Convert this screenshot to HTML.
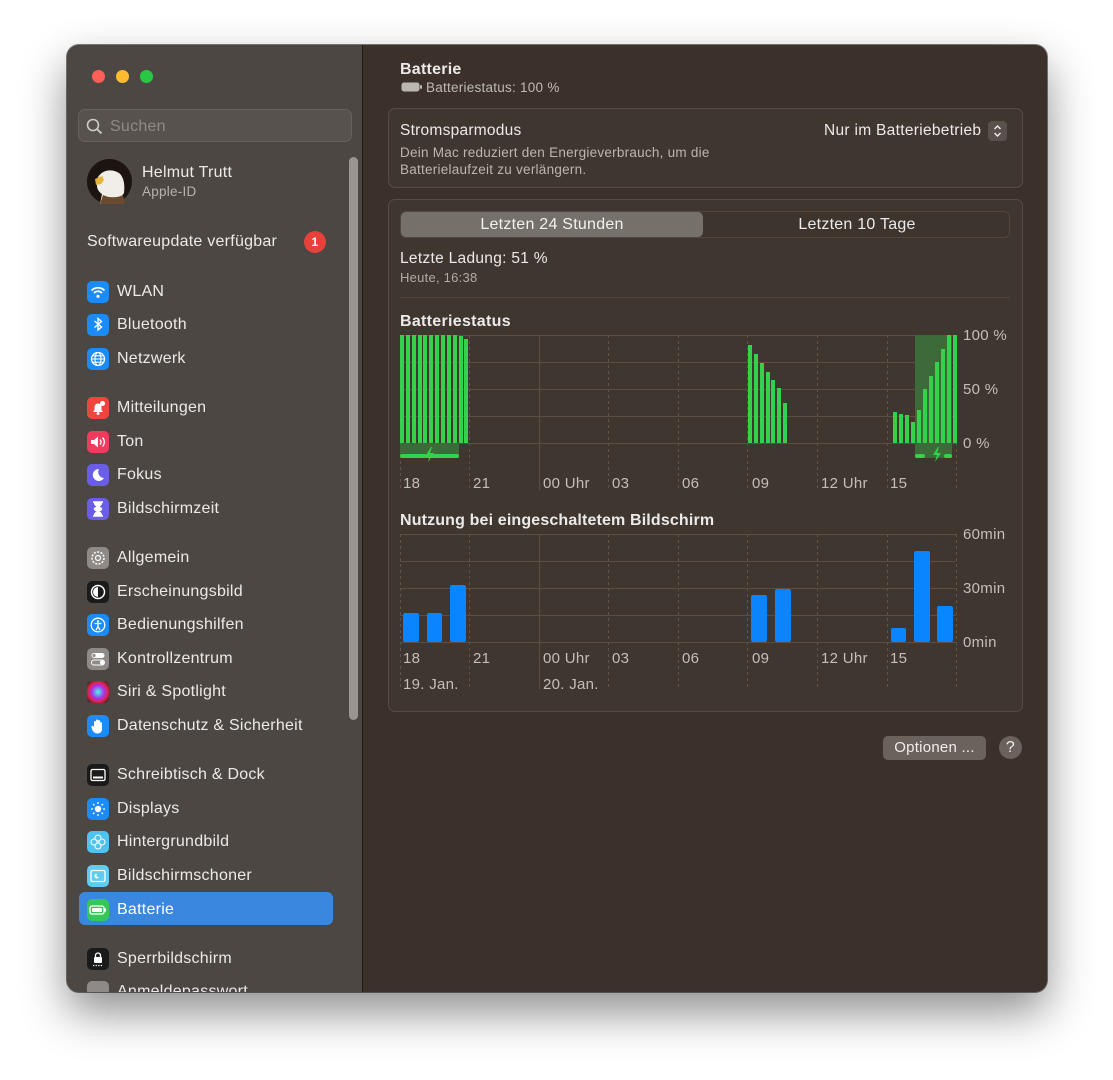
<!DOCTYPE html>
<html><head><meta charset="utf-8"><style>
*{margin:0;padding:0;box-sizing:border-box}
body{width:1113px;height:1080px;background:#fff;font-family:"Liberation Sans",sans-serif;position:relative;overflow:hidden;letter-spacing:.25px}
.win{position:absolute;left:67px;top:45px;width:980px;height:947px;border-radius:12px;overflow:hidden;background:#3b312a;box-shadow:0 20px 45px rgba(0,0,0,.45),0 0 0 1px rgba(0,0,0,.5)}
.side{position:absolute;left:0;top:0;width:296px;height:947px;background:#4c4743;border-right:1px solid #1e1a17}
.t{position:absolute;white-space:nowrap}
.dot{position:absolute;top:25px;width:13px;height:13px;border-radius:50%}
.row{position:absolute;left:20px;height:22px;display:flex;align-items:center;color:#eceae8;font-size:16px;padding-top:1px}
.ic{width:22px;height:22px;border-radius:5px;margin-right:8px;display:flex;align-items:center;justify-content:center;color:#fff;font-size:13px;flex:none}
.card{position:absolute;background:#3f3630;border:1px solid #564c45;border-radius:7px}
</style></head><body>
<div class="win">
 <div class="side">
  <div class="dot" style="left:25px;background:#fe5f57"></div>
  <div class="dot" style="left:49px;background:#febc2e"></div>
  <div class="dot" style="left:73px;background:#28c840"></div>
  <div style="position:absolute;left:11px;top:64px;width:274px;height:33px;border-radius:7px;background:#57524e;border:1px solid #66615d"></div>
  <svg style="position:absolute;left:19px;top:73px" width="17" height="17"><circle cx="7" cy="7" r="5.5" fill="none" stroke="#cfcbc8" stroke-width="1.6"/><path d="M11 11l4.5 4.5" stroke="#cfcbc8" stroke-width="1.8"/></svg>
  <div class="t" style="left:43px;top:73px;font-size:16px;color:#8f8a86">Suchen</div>
  <svg style="position:absolute;left:20px;top:114px" width="45" height="45"><circle cx="22.5" cy="22.5" r="22.5" fill="#1c1410"/><path d="M10 20c4-9 14-11 22-6 5 4 6 12 5 20l-8 11H13l2-10c-3-2-5-5-5-8z" fill="#f1eee9"/><path d="M8 20l7-3 2 4-3 4-5 1z" fill="#e7b43a"/><path d="M13 45l3-9c6 3 14 3 20 0l2 9z" fill="#6b4a30"/></svg>
  <div class="t" style="left:75px;top:119px;font-size:16px;color:#eceae8">Helmut Trutt</div>
  <div class="t" style="left:75px;top:139px;font-size:13.5px;color:#b7b2ae">Apple-ID</div>
  <div class="t" style="left:20px;top:188px;font-size:16px;color:#eceae8;letter-spacing:.25px">Softwareupdate verfügbar</div>
  <div style="position:absolute;left:237px;top:186px;width:22px;height:22px;border-radius:50%;background:#e8403a;color:#fff;font-size:12px;font-weight:bold;text-align:center;line-height:22px">1</div>
  <div style="position:absolute;left:282px;top:112px;width:9px;height:563px;border-radius:5px;background:#9a9591"></div>
  <div style="position:absolute;left:12px;top:847px;width:254px;height:33px;border-radius:6px;background:#3a87e0"></div>

  <div class="row" style="top:235px"><div class="ic" style="background:#1a8bf7">
   <svg width="16" height="14"><path d="M1.5 5.5a9 9 0 0 1 13 0M4 8a5.5 5.5 0 0 1 8 0" stroke="#fff" stroke-width="1.8" fill="none"/><circle cx="8" cy="11.3" r="1.6" fill="#fff"/></svg></div>WLAN</div>
  <div class="row" style="top:268px"><div class="ic" style="background:#1a8bf7">
   <svg width="10" height="15"><path d="M1.5 4l7 6-3.5 3V1.5l3.5 3-7 6" stroke="#fff" stroke-width="1.4" fill="none"/></svg></div>Bluetooth</div>
  <div class="row" style="top:302px"><div class="ic" style="background:#1a8bf7">
   <svg width="16" height="16"><circle cx="8" cy="8" r="6.5" stroke="#fff" stroke-width="1.3" fill="none"/><ellipse cx="8" cy="8" rx="3" ry="6.5" stroke="#fff" stroke-width="1.1" fill="none"/><path d="M1.5 8h13M2.5 4.8h11M2.5 11.2h11" stroke="#fff" stroke-width="1.1"/></svg></div>Netzwerk</div>
  <div class="row" style="top:351px"><div class="ic" style="background:#f0453e">
   <svg width="16" height="16"><path d="M3 12h10l-1.5-2V7a3.5 3.5 0 0 0-7 0v3z" fill="#fff"/><circle cx="8" cy="13.5" r="1.5" fill="#fff"/><circle cx="12.5" cy="3.5" r="2.5" fill="#fff"/></svg></div>Mitteilungen</div>
  <div class="row" style="top:385px"><div class="ic" style="background:#f03a5e">
   <svg width="16" height="14"><path d="M1 5h3l4-3.5v11L4 9H1z" fill="#fff"/><path d="M10 4.5a3.5 3.5 0 0 1 0 5M12.5 2.5a6.5 6.5 0 0 1 0 9" stroke="#fff" stroke-width="1.3" fill="none"/></svg></div>Ton</div>
  <div class="row" style="top:418px"><div class="ic" style="background:#6a5ee8">
   <svg width="14" height="14"><path d="M8 1a6 6 0 1 0 5 9A6 6 0 0 1 8 1z" fill="#fff"/></svg></div>Fokus</div>
  <div class="row" style="top:452px"><div class="ic" style="background:#6a5ee8">
   <svg width="12" height="16"><path d="M1 1h10M1 15h10M2.5 1.5c0 4 7 4.5 7 6.5s-7 2.5-7 6.5h7c0-4-7-4.5-7-6.5s7-2.5 7-6.5" stroke="#fff" stroke-width="1.5" fill="#fff"/></svg></div>Bildschirmzeit</div>
  <div class="row" style="top:501px"><div class="ic" style="background:#8e8a87">
   <svg width="16" height="16"><circle cx="8" cy="8" r="6" stroke="#fff" stroke-width="1.5" fill="none" stroke-dasharray="2 1.4"/><circle cx="8" cy="8" r="2.5" stroke="#fff" stroke-width="1.2" fill="none"/></svg></div>Allgemein</div>
  <div class="row" style="top:535px"><div class="ic" style="background:#1a1a1a">
   <svg width="16" height="16"><circle cx="8" cy="8" r="6.5" stroke="#fff" stroke-width="1.5" fill="none"/><path d="M8 3a5 5 0 0 0 0 10z" fill="#fff"/></svg></div>Erscheinungsbild</div>
  <div class="row" style="top:568px"><div class="ic" style="background:#1a8bf7">
   <svg width="16" height="16"><circle cx="8" cy="8" r="6.8" stroke="#fff" stroke-width="1.3" fill="none"/><circle cx="8" cy="4.5" r="1.2" fill="#fff"/><path d="M4.5 6.5h7M8 6.5v3l-2 3.5M8 9.5l2 3.5" stroke="#fff" stroke-width="1.3" fill="none"/></svg></div>Bedienungshilfen</div>
  <div class="row" style="top:602px"><div class="ic" style="background:#8e8a87">
   <svg width="16" height="16"><rect x="1.5" y="2" width="13" height="5" rx="2.5" fill="#fff"/><rect x="1.5" y="9" width="13" height="5" rx="2.5" stroke="#fff" fill="none"/><circle cx="4" cy="4.5" r="1.6" fill="#8e8a87"/><circle cx="12" cy="11.5" r="2" fill="#fff"/></svg></div>Kontrollzentrum</div>
  <div class="row" style="top:635px"><div class="ic" style="background:radial-gradient(circle,#4fd 0,#a3e 40%,#d24 65%,#222 90%)"></div>Siri &amp; Spotlight</div>
  <div class="row" style="top:669px"><div class="ic" style="background:#1a8bf7">
   <svg width="14" height="16"><path d="M3 9V4a1 1 0 0 1 2 0V8V2.5a1 1 0 0 1 2 0V8V3a1 1 0 0 1 2 0v5.5V5a1 1 0 0 1 2 0v6c0 3-2 4.5-4.5 4.5S2.5 14 1 11.5L.5 9a1 1 0 0 1 2-.5z" fill="#fff"/></svg></div>Datenschutz &amp; Sicherheit</div>
  <div class="row" style="top:718px"><div class="ic" style="background:#1a1a1a">
   <svg width="16" height="14"><rect x="1" y="1.5" width="14" height="11" rx="1.5" stroke="#fff" stroke-width="1.3" fill="none"/><rect x="3" y="8.5" width="10" height="2" fill="#fff"/></svg></div>Schreibtisch &amp; Dock</div>
  <div class="row" style="top:752px"><div class="ic" style="background:#1a8bf7">
   <svg width="16" height="16"><circle cx="8" cy="8" r="3.2" fill="#fff"/><path d="M8 1v2M8 13v2M1 8h2M13 8h2M3 3l1.4 1.4M11.6 11.6L13 13M3 13l1.4-1.4M11.6 4.4L13 3" stroke="#fff" stroke-width="1.3"/></svg></div>Displays</div>
  <div class="row" style="top:785px"><div class="ic" style="background:#4ec3ee">
   <svg width="16" height="16" fill="none" stroke="#fff" stroke-width="1"><circle cx="8" cy="4" r="3"/><circle cx="8" cy="12" r="3"/><circle cx="4" cy="8" r="3"/><circle cx="12" cy="8" r="3"/></svg></div>Hintergrundbild</div>
  <div class="row" style="top:819px"><div class="ic" style="background:#5fcdf0">
   <svg width="16" height="14"><rect x="1" y="1.5" width="14" height="11" rx="1.5" stroke="#fff" stroke-width="1.3" fill="none"/><path d="M7 4.5a2.5 2.5 0 1 0 2 4a2.5 2.5 0 0 1-2-4z" fill="#fff"/></svg></div>Bildschirmschoner</div>
  <div class="row" style="top:853px;color:#fff"><div class="ic" style="background:#35c759">
   <svg width="18" height="12"><rect x="1" y="2" width="14" height="8" rx="2" stroke="#fff" stroke-width="1.3" fill="none"/><rect x="3" y="4" width="10" height="4" rx="1" fill="#fff"/><rect x="15.5" y="4.5" width="1.5" height="3" fill="#fff"/></svg></div>Batterie</div>
  <div class="row" style="top:902px"><div class="ic" style="background:#1a1a1a">
   <svg width="16" height="16"><rect x="4" y="6" width="8" height="6" rx="1" fill="#fff"/><path d="M5.5 6V4.5a2.5 2.5 0 0 1 5 0V6" stroke="#fff" stroke-width="1.3" fill="none"/><path d="M3 14.5h10" stroke="#fff" stroke-width="1.3" stroke-dasharray="1.3 1.3"/></svg></div>Sperrbildschirm</div>
  <div class="row" style="top:935px"><div class="ic" style="background:#8e8a87"></div>Anmeldepasswort</div>
 </div>
</div>

<div class="t" style="left:400px;top:61px;font-size:16px;font-weight:bold;color:#eceae8">Batterie</div>
<svg style="position:absolute;left:401px;top:81px" width="22" height="12"><rect x=".5" y="1.5" width="18" height="9" rx="2.5" fill="#bcb6b1"/><rect x="19" y="4" width="2" height="4" rx="1" fill="#bcb6b1"/></svg>
<div class="t" style="left:426px;top:80px;font-size:13.5px;color:#c0bab5">Batteriestatus: 100 %</div>

<div class="card" style="left:388px;top:108px;width:635px;height:80px"></div>
<div class="t" style="left:400px;top:122px;font-size:15.5px;color:#eceae8">Stromsparmodus</div>
<div class="t" style="left:400px;top:144px;font-size:13.5px;line-height:17px;color:#bcb5b0">Dein Mac reduziert den Energieverbrauch, um die<br>Batterielaufzeit zu verlängern.</div>
<div class="t" style="left:824px;top:122px;font-size:15.5px;color:#eceae8;letter-spacing:.3px">Nur im Batteriebetrieb</div>
<div style="position:absolute;left:988px;top:121px;width:19px;height:20px;border-radius:4px;background:#5a504a"></div>
<svg style="position:absolute;left:992px;top:123px" width="11" height="16"><path d="M2.5 6l3-3 3 3M2.5 10l3 3 3-3" stroke="#eee" stroke-width="1.4" fill="none"/></svg>

<div class="card" style="left:388px;top:199px;width:635px;height:513px"></div>
<div style="position:absolute;left:400px;top:211px;width:610px;height:27px;border-radius:6px;background:#3d342e;border:1px solid #51473f"></div>
<div style="position:absolute;left:401px;top:212px;width:302px;height:25px;border-radius:5px;background:#76706b"></div>
<div class="t" style="left:401px;top:216px;width:302px;text-align:center;font-size:16px;color:#f2f0ee">Letzten 24 Stunden</div>
<div class="t" style="left:705px;top:216px;width:304px;text-align:center;font-size:16px;color:#eceae8">Letzten 10 Tage</div>
<div class="t" style="left:400px;top:250px;font-size:15.5px;color:#eceae8;letter-spacing:.3px">Letzte Ladung: 51 %</div>
<div class="t" style="left:400px;top:270px;font-size:13px;color:#b0a9a4">Heute, 16:38</div>
<div style="position:absolute;left:400px;top:297px;width:610px;height:1px;background:#51473f"></div>
<div class="t" style="left:400px;top:313px;font-size:16px;font-weight:bold;color:#eceae8;letter-spacing:.3px">Batteriestatus</div>
<div class="t" style="left:400px;top:512px;font-size:16px;font-weight:bold;color:#eceae8;letter-spacing:.15px">Nutzung bei eingeschaltetem Bildschirm</div>

<svg style="position:absolute;left:0;top:0" width="1113" height="1080" font-family="Liberation Sans" font-size="15" letter-spacing=".3" fill="#c4beb9">
 <g stroke="#5a4f47" stroke-width="1">
  <path d="M400 335.5h556M400 362.5h556M400 389.5h556M400 416.5h556M400 443.5h556"/>
  <path d="M400 534.5h556M400 561.5h556M400 588.5h556M400 615.5h556M400 642.5h556"/>
  <path d="M539.5 335v155M539.5 534v155"/>
 </g>
 <g stroke="#5e544c" stroke-width="1" stroke-dasharray="3 3">
  <path d="M400.5 335v155M469.5 335v155M608.5 335v155M678.5 335v155M747.5 335v155M817.5 335v155M887.5 335v155M956.5 335v155"/>
  <path d="M400.5 534v155M469.5 534v155M608.5 534v155M678.5 534v155M747.5 534v155M817.5 534v155M887.5 534v155M956.5 534v155"/>
 </g>
 <rect x="400" y="443" width="59" height="15" fill="#3d6a39"/>
 <rect x="915" y="335" width="37" height="123" fill="#3d6a39"/>
 <g fill="#34d14a">
  <rect x="400" y="335" width="4" height="108"/><rect x="406" y="335" width="4" height="108"/><rect x="412" y="335" width="4" height="108"/><rect x="418" y="335" width="4" height="108"/><rect x="423" y="335" width="4" height="108"/><rect x="429" y="335" width="4" height="108"/><rect x="435" y="335" width="4" height="108"/><rect x="441" y="335" width="4" height="108"/><rect x="447" y="335" width="4" height="108"/><rect x="453" y="335" width="4" height="108"/><rect x="459" y="336" width="4" height="107"/><rect x="464" y="339" width="4" height="104"/>
  <rect x="748" y="345" width="4" height="98"/><rect x="754" y="354" width="4" height="89"/><rect x="760" y="363" width="4" height="80"/><rect x="766" y="372" width="4" height="71"/><rect x="771" y="380" width="4" height="63"/><rect x="777" y="388" width="4" height="55"/><rect x="783" y="403" width="4" height="40"/>
  <rect x="893" y="412" width="4" height="31"/><rect x="899" y="414" width="4" height="29"/><rect x="905" y="415" width="4" height="28"/><rect x="911" y="422" width="4" height="21"/><rect x="917" y="410" width="4" height="33"/><rect x="923" y="389" width="4" height="54"/><rect x="929" y="376" width="4" height="67"/><rect x="935" y="362" width="4" height="81"/><rect x="941" y="349" width="4" height="94"/><rect x="947" y="335" width="4" height="108"/><rect x="953" y="335" width="4" height="108"/>
  <rect x="400" y="454" width="59" height="4" rx="2"/>
  <path d="M431 447l-5 8h4l-2 7 6-9h-4l2-6z"/>
  <rect x="915" y="454" width="10" height="4" rx="2"/><rect x="944" y="454" width="8" height="4" rx="2"/>
  <path d="M938 447l-5 8h4l-2 7 6-9h-4l2-6z"/>
 </g>
 <g fill="#0a84ff">
  <rect x="403" y="613" width="16" height="29" rx="2"/><rect x="427" y="613" width="15" height="29" rx="2"/><rect x="450" y="585" width="16" height="57" rx="2"/>
  <rect x="751" y="595" width="16" height="47" rx="2"/><rect x="775" y="589" width="16" height="53" rx="2"/>
  <rect x="891" y="628" width="15" height="14" rx="2"/><rect x="914" y="551" width="16" height="91" rx="2"/><rect x="937" y="606" width="16" height="36" rx="2"/>
 </g>
 <g>
  <text x="963" y="340">100 %</text><text x="963" y="394">50 %</text><text x="963" y="448">0 %</text>
  <text x="963" y="539">60min</text><text x="963" y="593">30min</text><text x="963" y="647">0min</text>
  <text x="403" y="488">18</text><text x="473" y="488">21</text><text x="543" y="488">00 Uhr</text><text x="612" y="488">03</text><text x="682" y="488">06</text><text x="752" y="488">09</text><text x="821" y="488">12 Uhr</text><text x="890" y="488">15</text>
  <text x="403" y="663">18</text><text x="473" y="663">21</text><text x="543" y="663">00 Uhr</text><text x="612" y="663">03</text><text x="682" y="663">06</text><text x="752" y="663">09</text><text x="821" y="663">12 Uhr</text><text x="890" y="663">15</text>
  <text x="403" y="689">19. Jan.</text><text x="543" y="689">20. Jan.</text>
 </g>
</svg>

<div style="position:absolute;left:883px;top:736px;width:103px;height:24px;border-radius:5px;background:#6b625c;color:#f0eeec;font-size:15px;text-align:center;line-height:24px">Optionen ...</div>
<div style="position:absolute;left:999px;top:736px;width:23px;height:23px;border-radius:50%;background:#6b625c;color:#f0eeec;font-size:16px;text-align:center;line-height:23px">?</div>
</body></html>
